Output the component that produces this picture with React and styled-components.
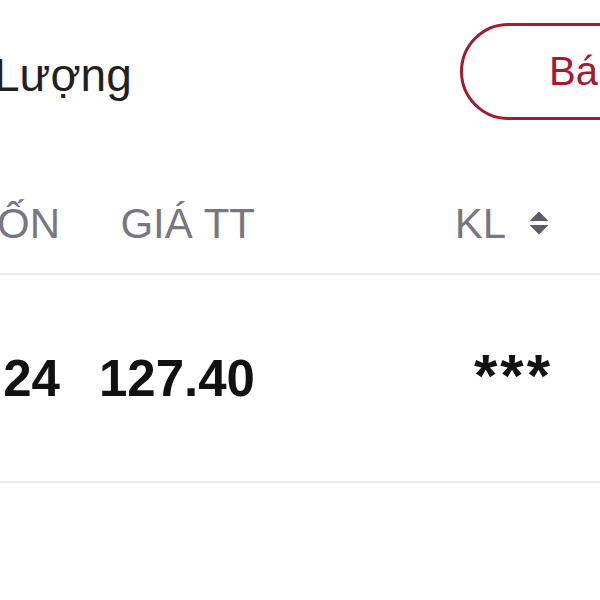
import React from "react";
import styled, { createGlobalStyle } from "styled-components";

const GlobalStyle = createGlobalStyle`
  html, body {
    margin: 0;
    padding: 0;
    background: #ffffff;
  }
  body {
    font-family: "Liberation Sans", Arial, sans-serif;
    -webkit-font-smoothing: antialiased;
  }
`;

const Page = styled.div`
  width: 600px;
  height: 600px;
  overflow: hidden;
  background: #ffffff;
`;

const TopBar = styled.div`
  height: 143px;
  display: flex;
  align-items: center;
`;

const Title = styled.div`
  flex: 1;
  margin-left: -6px;
  padding-top: 6px;
  font-size: 46px;
  line-height: 1;
  color: #1f1f24;
  white-space: nowrap;
`;

const ActionButton = styled.button`
  flex-shrink: 0;
  width: 220px;
  height: 97px;
  margin-right: -80px;
  padding: 0 0 0 86px;
  box-sizing: border-box;
  border: 3px solid #a11a2f;
  border-radius: 49px;
  background: #ffffff;
  color: #a11a2f;
  font-family: inherit;
  font-size: 40px;
  text-align: left;
  white-space: nowrap;
`;

const Row = styled.div`
  display: grid;
  grid-template-columns: 60px 195px 1fr;
  padding-right: 50px;
  height: ${(p) => p.$height}px;
  align-items: ${(p) => p.$align || "center"};
  border-bottom: 2px solid #ececee;
`;

const Cell = styled.div`
  display: flex;
  justify-content: flex-end;
  align-items: center;
  gap: ${(p) => p.$gap || 0}px;
  white-space: nowrap;
`;

const HeadText = styled.span`
  font-size: 42px;
  line-height: 1;
  color: #77777f;
  padding-bottom: ${(p) => p.$pb || 0}px;
`;

const ValueText = styled.span`
  font-size: 51px;
  font-weight: 700;
  line-height: 1;
  color: #111114;
`;

const Stars = styled(ValueText)`
  font-size: 60px;
  letter-spacing: 3px;
  margin-top: -4px;
  margin-right: -3px;
`;

const IconSlot = styled.div`
  padding-bottom: 30px;
`;

const SortIcon = () => (
  <svg width="22" height="26" viewBox="0 0 22 26" style={{ display: "block" }}>
    <path d="M11 1.5 L20 10.5 Q20.5 11 20 11 H2 Q1.5 11 2 10.5 Z" fill="#5c5c66" />
    <path d="M11 24.5 L20 15.5 Q20.5 15 20 15 H2 Q1.5 15 2 15.5 Z" fill="#5c5c66" />
  </svg>
);

export default function App() {
  return (
    <Page>
      <GlobalStyle />
      <TopBar>
        <Title>Lượng</Title>
        <ActionButton>Bán</ActionButton>
      </TopBar>
      <Row $height={130} $align="end">
        <Cell>
          <HeadText $pb={28}>GIÁ VỐN</HeadText>
        </Cell>
        <Cell>
          <HeadText $pb={28}>GIÁ TT</HeadText>
        </Cell>
        <Cell $gap={22}>
          <HeadText $pb={28}>KL</HeadText>
          <IconSlot>
            <SortIcon />
          </IconSlot>
        </Cell>
      </Row>
      <Row $height={206}>
        <Cell>
          <ValueText>125.24</ValueText>
        </Cell>
        <Cell>
          <ValueText>127.40</ValueText>
        </Cell>
        <Cell>
          <Stars>***</Stars>
        </Cell>
      </Row>
    </Page>
  );
}
